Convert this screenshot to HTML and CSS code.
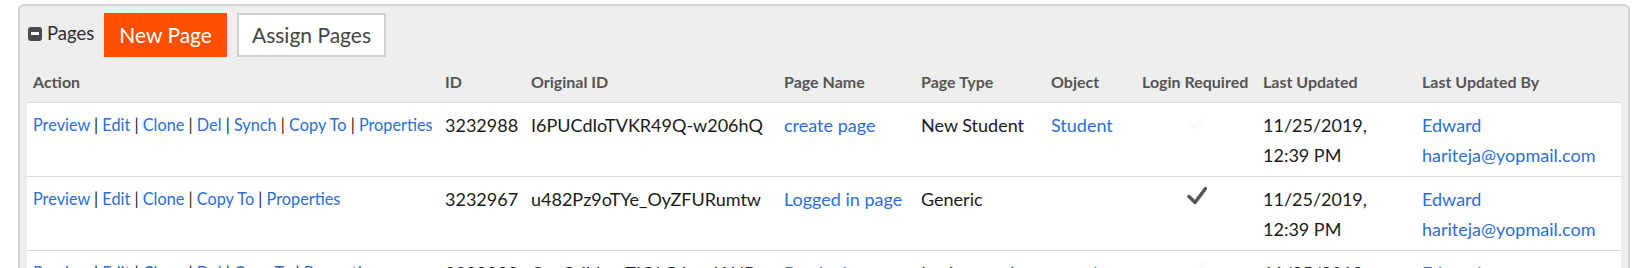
FILE: index.html
```html
<!DOCTYPE html>
<html lang="en">
  <head>
    <meta charset="UTF-8" />
    <meta name="viewport" content="width=device-width, initial-scale=1.0" />
    <title>Pages</title>
    <link rel="stylesheet" href="styles.css">
  </head>
  <body>
    <div class="panel">
      <div class="toolbar">
        <div class="panel-title">
          <span class="collapse-icon"></span>
          <span>Pages</span>
        </div>
        <button class="btn btn-primary">New Page</button>
        <button class="btn btn-default">Assign Pages</button>
      </div>

      <table class="pages-table">
        <colgroup>
          <col style="width: 412px" />
          <col style="width: 86px" />
          <col style="width: 253px" />
          <col style="width: 137px" />
          <col style="width: 130px" />
          <col style="width: 91px" />
          <col style="width: 121px" />
          <col style="width: 159px" />
          <col style="width: 205px" />
        </colgroup>
        <thead>
          <tr>
            <th>Action</th>
            <th>ID</th>
            <th>Original ID</th>
            <th>Page Name</th>
            <th>Page Type</th>
            <th>Object</th>
            <th>Login Required</th>
            <th>Last Updated</th>
            <th>Last Updated By</th>
          </tr>
        </thead>
        <tbody>
          <tr>
            <td class="actions">
              <a href="#">Preview</a> | <a href="#">Edit</a> | <a href="#">Clone</a> | <a href="#">Del</a> | <a href="#">Synch</a> | <a href="#">Copy To</a> | <a href="#">Properties</a>
            </td>
            <td>3232988</td>
            <td>I6PUCdIoTVKR49Q-w206hQ</td>
            <td><a href="#">create page</a></td>
            <td>New Student</td>
            <td><a href="#">Student</a></td>
            <td class="center">
              <svg class="check faint" width="20" height="19" viewBox="0 0 20 19"><path d="M2 10.5 L8 16.5 L18.5 2.5" /></svg>
            </td>
            <td>11/25/2019, 12:39 PM</td>
            <td><a href="#">Edward</a><br /><a href="#">hariteja@yopmail.com</a></td>
          </tr>
          <tr>
            <td class="actions">
              <a href="#">Preview</a> | <a href="#">Edit</a> | <a href="#">Clone</a> | <a href="#">Copy To</a> | <a href="#">Properties</a>
            </td>
            <td>3232967</td>
            <td>u482Pz9oTYe_OyZFURumtw</td>
            <td><a href="#">Logged in page</a></td>
            <td>Generic</td>
            <td></td>
            <td class="center">
              <svg class="check" width="20" height="19" viewBox="0 0 20 19"><path d="M2 10.5 L8 16.5 L18.5 2.5" /></svg>
            </td>
            <td>11/25/2019, 12:39 PM</td>
            <td><a href="#">Edward</a><br /><a href="#">hariteja@yopmail.com</a></td>
          </tr>
          <tr>
            <td class="actions">
              <a href="#">Preview</a> | <a href="#">Edit</a> | <a href="#">Clone</a> | <a href="#">Del</a> | <a href="#">Copy To</a> | <a href="#">Properties</a>
            </td>
            <td>3232932</td>
            <td>Oq-O4VwmTIQLG6qwJANPg</td>
            <td><a href="#">Postlogin</a></td>
            <td>Login portal</td>
            <td><a href="#">portal</a></td>
            <td class="center">
              <svg class="check faint" width="20" height="19" viewBox="0 0 20 19"><path d="M2 10.5 L8 16.5 L18.5 2.5" /></svg>
            </td>
            <td>11/25/2019, 12:39 PM</td>
            <td><a href="#">Edward</a><br /><a href="#">hariteja@yopmail.com</a></td>
          </tr>
        </tbody>
      </table>
    </div>
  </body>
</html>
```

FILE: styles.css
```css
* {
  margin: 0;
  padding: 0;
  box-sizing: border-box;
}

body {
  font-family: Lato, "Open Sans", Arial, sans-serif;
  background-color: #fff;
  color: #1a1a1a;
}

a {
  color: #2c6ed5;
  text-decoration: none;
}

/* Outer grey panel */
.panel {
  margin: 4px 6px 0 18px;
  background-color: #eeeeee;
  border: 2px solid #d2d2d2;
  border-radius: 6px;
  padding: 7px 7px 20px 7px;
}

.toolbar {
  display: flex;
  align-items: center;
  gap: 10px;
  padding-left: 1px;
}

.panel-title {
  display: flex;
  align-items: center;
  gap: 5px;
  font-size: 18.5px;
  line-height: 22px;
  color: #2e2e2e;
  margin-bottom: 5px;
}

.collapse-icon {
  display: inline-block;
  position: relative;
  width: 14px;
  height: 14px;
  border-radius: 3px;
  background-color: #4a4a4a;
  margin-top: 2px;
}

.collapse-icon::after {
  content: "";
  position: absolute;
  left: 3px;
  top: 5.5px;
  width: 8px;
  height: 3px;
  background-color: #fff;
}

.btn {
  font-family: Lato, "Open Sans", Arial, sans-serif;
  font-size: 21px;
  line-height: 24px;
  padding: 8px 13px;
  border: 2px solid;
  cursor: pointer;
}

.btn-primary {
  background-color: #fe5000;
  border-color: #fe5000;
  color: #fff;
}

.btn-default {
  background-color: #fff;
  border-color: #d0d0d0;
  color: #444;
}

/* Table */
.pages-table {
  width: 1594px;
  table-layout: fixed;
  border-collapse: collapse;
}

.pages-table th {
  text-align: left;
  font-size: 16px;
  font-weight: bold;
  line-height: 20px;
  color: #555;
  padding: 15px 6px 10px 6px;
  white-space: nowrap;
}

.pages-table td {
  background-color: #fff;
  border-top: 1px solid #dcdcdc;
  font-size: 18px;
  line-height: 30px;
  padding: 7px 6px 6px 6px;
  vertical-align: top;
}

.pages-table td.actions {
  font-size: 16.3px;
  color: #222;
}

.pages-table td.center {
  text-align: center;
}

.check {
  vertical-align: 1px;
}

.check path {
  fill: none;
  stroke: #555;
  stroke-width: 3.4;
  stroke-linecap: round;
  stroke-linejoin: round;
}

.check.faint path {
  stroke: #fafafa;
}
```
